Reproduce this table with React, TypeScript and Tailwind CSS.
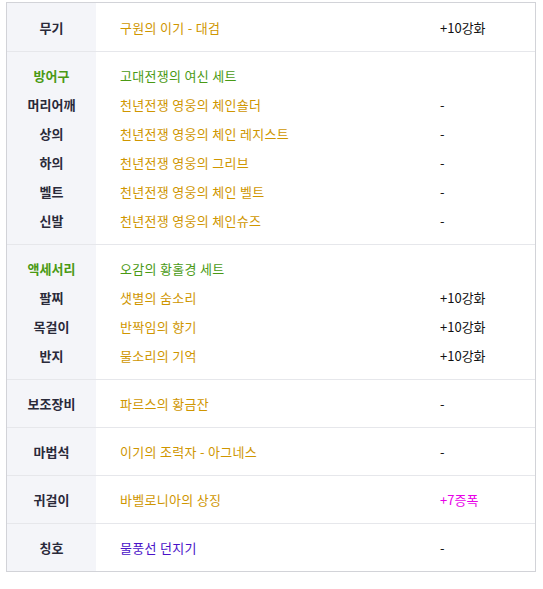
import React from "react";

type Line = { label: string; labelColor?: string; item: string; itemColor: string; enh?: string; enhColor?: string };
type Section = Line[];

const GOLD = "text-[#cf9600]";
const GREEN = "text-[#4a9a14]";

const sections: Section[] = [
  [{ label: "무기", item: "구원의 이기 - 대검", itemColor: GOLD, enh: "+10강화" }],
  [
    { label: "방어구", labelColor: GREEN, item: "고대전쟁의 여신 세트", itemColor: GREEN },
    { label: "머리어깨", item: "천년전쟁 영웅의 체인숄더", itemColor: GOLD, enh: "-" },
    { label: "상의", item: "천년전쟁 영웅의 체인 레지스트", itemColor: GOLD, enh: "-" },
    { label: "하의", item: "천년전쟁 영웅의 그리브", itemColor: GOLD, enh: "-" },
    { label: "벨트", item: "천년전쟁 영웅의 체인 벨트", itemColor: GOLD, enh: "-" },
    { label: "신발", item: "천년전쟁 영웅의 체인슈즈", itemColor: GOLD, enh: "-" },
  ],
  [
    { label: "액세서리", labelColor: GREEN, item: "오감의 황홀경 세트", itemColor: GREEN },
    { label: "팔찌", item: "샛별의 숨소리", itemColor: GOLD, enh: "+10강화" },
    { label: "목걸이", item: "반짝임의 향기", itemColor: GOLD, enh: "+10강화" },
    { label: "반지", item: "물소리의 기억", itemColor: GOLD, enh: "+10강화" },
  ],
  [{ label: "보조장비", item: "파르스의 황금잔", itemColor: GOLD, enh: "-" }],
  [{ label: "마법석", item: "이기의 조력자 - 아그네스", itemColor: GOLD, enh: "-" }],
  [{ label: "귀걸이", item: "바벨로니아의 상징", itemColor: GOLD, enh: "+7증폭", enhColor: "text-[#e800e8]" }],
  [{ label: "칭호", item: "물풍선 던지기", itemColor: "text-[#4a12c8]", enh: "-" }],
];

export default function App() {
  return (
    <div className="w-[543px] h-[589px] bg-white pt-[2px] pl-[6px]" style={{ fontFamily: '"Noto Sans CJK KR", "Noto Sans", sans-serif' }}>
      <div className="w-[530px] border border-[#d2d3d8] text-[13px]">
        {sections.map((sec, si) => (
          <div key={si} className={`flex ${si > 0 ? "border-t border-[#e6e7eb]" : ""}`}>
            <div className={`w-[89px] shrink-0 bg-[#f4f5f9] pb-[9px] ${si === 0 ? "pt-[10px]" : "pt-[9px]"} flex flex-col`}>
              {sec.map((l, li) => (
                <div key={li} className={`h-[29px] flex items-center justify-center font-bold ${l.labelColor ?? "text-[#2a2a3a]"}`}>
                  {l.label}
                </div>
              ))}
            </div>
            <div className={`flex-1 pb-[9px] ${si === 0 ? "pt-[10px]" : "pt-[9px]"} pl-[24px] flex flex-col`}>
              {sec.map((l, li) => (
                <div key={li} className="h-[29px] grid grid-cols-[320px_1fr] items-center">
                  <span className={`${l.itemColor} tracking-[0.3px]`}>{l.item}</span>
                  <span className={l.enhColor ?? "text-[#111]"}>{l.enh ?? ""}</span>
                </div>
              ))}
            </div>
          </div>
        ))}
      </div>
    </div>
  );
}
